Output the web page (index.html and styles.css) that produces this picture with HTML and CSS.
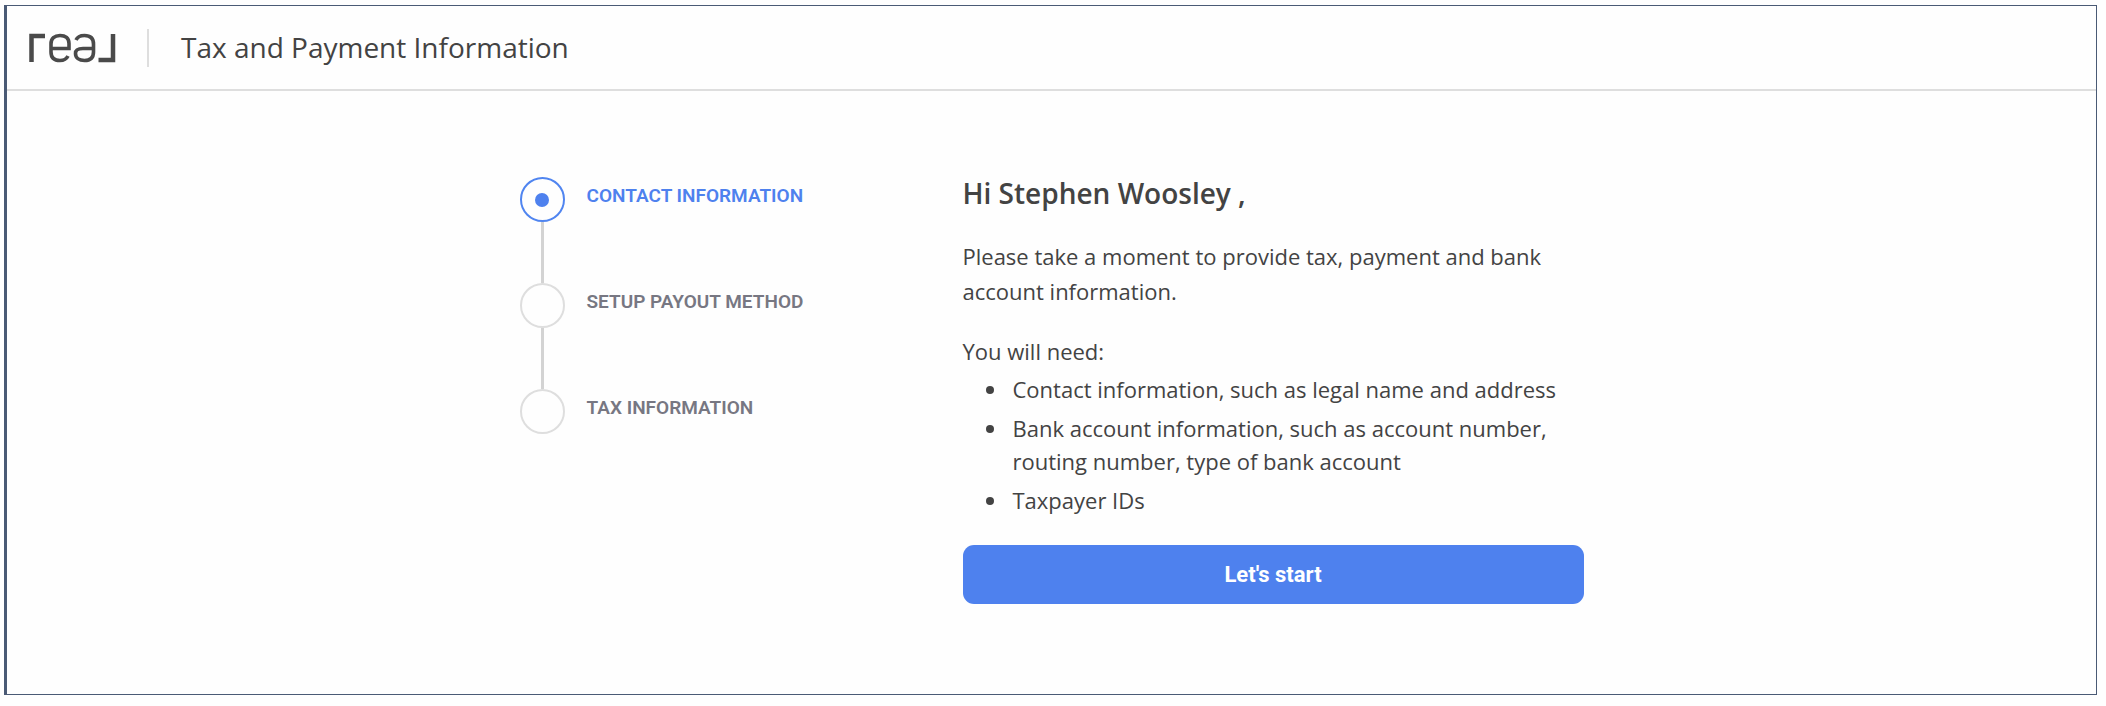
FILE: index.html
```html
<!DOCTYPE html>
<html lang="en">
  <head>
    <meta charset="UTF-8" />
    <meta name="viewport" content="width=device-width, initial-scale=1.0" />
    <title>Tax and Payment Information</title>
    <link rel="stylesheet" href="styles.css">
  </head>
  <body>
    <div class="page">
      <header class="header">
        <svg class="logo" width="88" height="30" viewBox="0 0 88 30" role="img" aria-label="real">
          <g fill="none" stroke="#4a4a4a" stroke-width="4.500">
            <path d="M2.500 29V3H16" />
            <path d="M84 1V27H69.500" />
          </g>
          <g fill="none" stroke="#4a4a4a" stroke-width="3.600">
            <path d="M22 15.500H40V10.500C40 5 36.500 2.500 31 2.500S22 5.500 22 11V19C22 25 25.500 27.500 31 27.500C35 27.500 37.500 26 39 23" />
            <path d="M47 7C48.500 3.500 51.500 2.500 55.500 2.500C61 2.500 64.500 5 64.500 11V19C64.500 25 61 27.500 55.500 27.500S46.500 25 46.500 20.500S49.500 15.500 54 15.500H64.500" />
          </g>
        </svg>
        <span class="divider"></span>
        <h1>Tax and Payment Information</h1>
      </header>

      <main class="content">
        <ol class="steps">
          <li class="step active"><span class="dot"></span><span class="label">Contact Information</span></li>
          <li class="step"><span class="dot"></span><span class="label">Setup Payout Method</span></li>
          <li class="step"><span class="dot"></span><span class="label">Tax Information</span></li>
        </ol>

        <section class="intro">
          <h2>Hi Stephen Woosley ,</h2>
          <p>Please take a moment to provide tax, payment and bank account information.</p>
          <p class="need">You will need:</p>
          <ul>
            <li>Contact information, such as legal name and address</li>
            <li>Bank account information, such as account number, routing number, type of bank account</li>
            <li>Taxpayer IDs</li>
          </ul>
          <button type="button">Let's start</button>
        </section>
      </main>
    </div>
  </body>
</html>
```
FILE: styles.css
```css
* {
  box-sizing: border-box;
}

body {
  display: flex;
  margin: 0;
  padding: 5px 9px 11px 4px;
  min-height: 100vh;
  background-color: #fefefe;
  color: #434343;
  font-family: "Open Sans", sans-serif;
  font-size: 22px;
  line-height: 35px;
}

.page {
  flex: 1;
  border: 1px solid #4a5a75;
  border-left-width: 3px;
}

.header {
  display: flex;
  align-items: center;
  height: 85px;
  padding-left: 22px;
  border-bottom: 2px solid #dedede;
}

.divider {
  width: 2px;
  height: 38px;
  margin: 0 32px 0 30px;
  background-color: #dedede;
}

h1 {
  margin: 0;
  font-size: 28px;
  font-weight: 400;
}

.content {
  display: grid;
  grid-template-columns: 443px 1fr;
  max-width: 1064px;
  margin: 0 auto;
  padding: 83px 0;
}

.steps {
  margin: 3px 0 0;
  padding: 0;
  list-style: none;
}

.step {
  position: relative;
  display: flex;
  align-items: flex-start;
  gap: 22px;
  padding-bottom: 61px;
}

/* connector to the next step */
.step:not(:last-child)::before {
  content: "";
  position: absolute;
  top: 45px;
  bottom: 0;
  left: 21px;
  width: 3px;
  background-color: #d3d3d3;
}

.dot {
  display: flex;
  align-items: center;
  justify-content: center;
  width: 45px;
  height: 45px;
  border: 2px solid #dedede;
  border-radius: 50%;
}

.label {
  padding-top: 5px;
  color: #777782;
  font-family: Roboto, sans-serif;
  font-size: 19px;
  font-weight: 600;
  line-height: 28px;
  text-transform: uppercase;
}

.active .dot {
  border-color: #5085f0;
}

.active .dot::after {
  content: "";
  width: 14px;
  height: 14px;
  border-radius: 50%;
  background-color: #4e81ee;
}

.active .label {
  color: #4e81ee;
}

h2 {
  margin: 0 0 27px;
  font-size: 28px;
  font-weight: 600;
  line-height: 38px;
}

p {
  margin: 0 0 25px;
}

.need {
  margin-bottom: 4px;
}

.intro ul {
  margin: 0 0 28px;
  padding-left: 46px;
  line-height: 33px;
}

.intro li {
  padding-left: 4px;
}

.intro li + li {
  margin-top: 6px;
}

button {
  width: 100%;
  height: 59px;
  border: 0;
  border-radius: 11px;
  background-color: #4e81ee;
  color: #fff;
  font-family: Roboto, sans-serif;
  font-size: 22px;
  font-weight: 700;
}
```
